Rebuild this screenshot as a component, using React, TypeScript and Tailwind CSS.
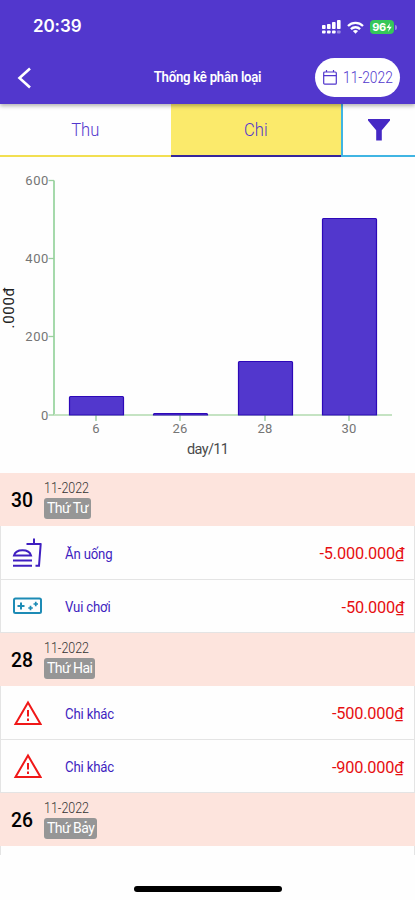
import React from 'react';

type Entry = { name: string; amount: string; icon: 'food' | 'game' | 'warning' };
type Day = { day: string; weekday: string; entries: Entry[] };

const days: Day[] = [
  {
    day: '30',
    weekday: 'Thứ Tư',
    entries: [
      { name: 'Ăn uống', amount: '-5.000.000₫', icon: 'food' },
      { name: 'Vui chơi', amount: '-50.000₫', icon: 'game' },
    ],
  },
  {
    day: '28',
    weekday: 'Thứ Hai',
    entries: [
      { name: 'Chi khác', amount: '-500.000₫', icon: 'warning' },
      { name: 'Chi khác', amount: '-900.000₫', icon: 'warning' },
    ],
  },
  { day: '26', weekday: 'Thứ Bảy', entries: [] },
];

// bar x, bar top, label
const bars = [
  { x: 69, top: 239.5, label: '6' },
  { x: 153, top: 256.5, label: '26' },
  { x: 238, top: 204.5, label: '28' },
  { x: 322, top: 61.5, label: '30' },
];

const ticks = [
  { y: 23.5, label: '600' },
  { y: 101.5, label: '400' },
  { y: 179.5, label: '200' },
  { y: 258, label: '0' },
];

const StatusBar = () => (
  <div className="flex h-[54px] items-center justify-between pl-[33px] pr-[18px]">
    <span className="text-[17px] font-semibold tracking-[-0.1px] font-['Inter',sans-serif]">20:39</span>
    <div className="flex items-center gap-[6px]">
      <svg width="19" height="14" viewBox="0 0 19 14" fill="currentColor">
        <rect x="0" y="5" width="3.6" height="4" rx="0.8" />
        <rect x="5" y="4" width="3.6" height="5" rx="0.8" />
        <rect x="10" y="2" width="3.6" height="7" rx="0.8" />
        <rect x="15" y="0" width="3.6" height="9" rx="0.8" />
        <rect x="0" y="10.5" width="3.6" height="3" rx="0.8" />
        <rect x="5" y="10.5" width="3.6" height="3" rx="0.8" />
        <rect x="10" y="10.5" width="3.6" height="3" rx="0.8" />
        <rect x="15" y="10.5" width="3.6" height="3" rx="0.8" opacity="0.4" />
      </svg>
      <svg width="17" height="13" viewBox="0 0 17 13" fill="none" stroke="currentColor" strokeWidth="2.3">
        <path d="M1 5a10.8 10.8 0 0 1 15 0" />
        <path d="M3.9 8.1a6.6 6.6 0 0 1 9.2 0" />
        <path d="M8.5 12.8 5.9 10.1a3.8 3.8 0 0 1 5.2 0Z" fill="currentColor" stroke="none" />
      </svg>
      <div className="flex items-center gap-px">
        <div className="flex h-[14px] w-[24px] items-center justify-center rounded-[4px] bg-[#35c759] text-[11px] font-bold leading-none tracking-[-0.5px] font-['Inter',sans-serif]">
          96
          <svg width="6" height="9" viewBox="0 0 6 9" fill="currentColor">
            <path d="M4 0 0.5 5H3L2 9 5.8 3.7H3.3Z" />
          </svg>
        </div>
        <div className="h-[5px] w-[2px] rounded-r bg-white/40" />
      </div>
    </div>
  </div>
);

const Header = () => (
  <header className="relative z-10 h-[104px] bg-[#5237cd] text-white shadow-[0_2px_4px_rgba(0,0,0,0.3)]">
    <StatusBar />
    <div className="grid h-[47px] grid-cols-[100px_1fr_100px] items-center">
      <svg className="ml-[17px]" width="14" height="22" viewBox="0 0 14 22" fill="none" stroke="currentColor" strokeWidth="2.6">
        <path d="M13 1.5 2.5 11 13 20.5" />
      </svg>
      <h1 className="origin-center scale-x-[0.88] whitespace-nowrap text-center text-[15px] font-semibold tracking-[-0.3px]">
        Thống kê phân loại
      </h1>
      <button className="flex h-[39px] w-[85px] items-center rounded-full bg-white pl-[8px] text-[#5237cd]">
        <svg className="shrink-0" width="14" height="15" viewBox="0 0 14 15" fill="none" stroke="currentColor" strokeWidth="1.2">
          <rect x="0.7" y="2" width="12.6" height="12.2" rx="1" />
          <path d="M0.7 5.7h12.6M3.5 0v2M10.5 0v2" />
        </svg>
        <span className="ml-[6px] origin-left scale-x-[0.81] whitespace-nowrap text-[17px] font-light">11-2022</span>
      </button>
    </div>
  </header>
);

const Tabs = () => (
  <nav className="flex h-[53px] text-[18px] font-light text-[#5237cd]">
    <button className="w-[171px] border-b-2 border-[#f2df52]">
      <span className="inline-block scale-x-[0.92]">Thu</span>
    </button>
    <button className="w-[170px] border-b-2 border-[#35259c] bg-[#fbea6b]">
      <span className="inline-block scale-x-[0.92]">Chi</span>
    </button>
    <button className="flex flex-1 items-center justify-center border-b-2 border-l-2 border-[#40b5e3]">
      <svg width="22" height="22" viewBox="0 0 22 22" fill="#4528c4">
        <path d="M0 0H22V1.5L13.8 11.2V21.5H8.2V11.2L0 1.5Z" />
      </svg>
    </button>
  </nav>
);

const BarChart = () => (
  <svg className="block" width="415" height="316" viewBox="0 0 415 316">
    <g fontFamily="Roboto, sans-serif">
      <path d="M54 23.5V258" stroke="#8fd096" strokeWidth="1.6" />
      <path d="M54 258H392" stroke="#c5e3c3" strokeWidth="1.8" />
      {ticks.map((t) => (
        <g key={t.label}>
          <path d={`M48.5 ${t.y}H54`} stroke="#9bcf9e" strokeWidth="1.3" />
          <text x="49" y={t.y + 4.5} textAnchor="end" fontSize="13" letterSpacing="0.6" fill="#757575">
            {t.label}
          </text>
        </g>
      ))}
      {bars.map((b) => (
        <g key={b.label}>
          <path d={`M${b.x + 27} 258v6`} stroke="#8fc795" strokeWidth="1.3" />
          <path
            d={`M${b.x + 0.5} 258V${b.top + 1}q0-1 1-1h52q1 0 1 1V258Z`}
            fill="#5237cd"
            stroke="#2d08b8"
            strokeWidth="1.2"
          />
          <text x={b.x + 27} y="275.5" textAnchor="middle" fontSize="13" letterSpacing="0.3" fill="#757575">
            {b.label}
          </text>
        </g>
      ))}
      <text x="208" y="297" textAnchor="middle" fontSize="14.5" textLength="42" fill="#4a4a4a">
        day/11
      </text>
      <text transform="translate(14 151) rotate(-90)" textAnchor="middle" fontSize="15" textLength="41" fill="#222">
        .000đ
      </text>
    </g>
  </svg>
);

const FoodIcon = () => (
  <svg width="30" height="30" viewBox="0 0 30 30" fill="none" stroke="#3f1fc0" strokeWidth="2">
    <path d="M2 17.5C4 10.5 17 10.5 19 17.5Z" />
    <path d="M1 22.5H20M1 27.8H20" />
    <path d="M14.5 6H29.5M22 0.5V6M28.7 6 27 27.8H23.5" />
  </svg>
);

const GameIcon = () => (
  <svg width="30" height="30" viewBox="0 0 30 30" fill="none" stroke="#1d8bb5" strokeWidth="2">
    <rect x="2" y="7.5" width="27" height="14.5" rx="1.5" />
    <path d="M5.5 15h7M9 11.5v7" />
    <path d="M21.5 13h4.5M23.75 10.8v4.5M16.3 17h4.5M18.5 14.8v4.5" strokeWidth="1.7" />
  </svg>
);

const WarningIcon = () => (
  <svg width="30" height="30" viewBox="0 0 30 30" fill="none" stroke="#f01818" strokeWidth="2">
    <path d="M16 4.5 28.5 26H3.5Z" />
    <path d="M16 12v6.5M16 20.5v2.5" />
  </svg>
);

const icons = { food: FoodIcon, game: GameIcon, warning: WarningIcon };

const EntryRow = ({ entry, first }: { entry: Entry; first: boolean }) => {
  const Icon = icons[entry.icon];
  return (
    <div className={`flex items-center border-x border-b border-[#e4e4e4] pl-[11px] pr-[10px] ${first ? 'h-[54px]' : 'h-[53px]'}`}>
      <Icon />
      <span className="ml-[23px] mt-[3px] origin-left scale-x-[0.88] text-[15px] tracking-[-0.2px] text-[#3f1fc0]">{entry.name}</span>
      <span className="ml-auto mt-[3px] origin-right scale-x-[0.96] text-[17px] tracking-[-0.2px] text-[#e60f12]">{entry.amount}</span>
    </div>
  );
};

const DayHeader = ({ day, weekday }: { day: string; weekday: string }) => (
  <div className="flex h-[53px] items-center bg-[#fde4dd] pl-[11px]">
    <span className="mt-[3px] w-[33px] origin-left scale-x-[0.92] text-[21px] font-medium text-black">{day}</span>
    <div className="flex flex-col items-start">
      <span className="origin-left scale-x-[0.83] text-[15px] font-light leading-[17px] text-[#333]">11-2022</span>
      <span className="mt-px h-[21px] rounded-[3px] bg-[#969696] px-[3px] text-[14px] leading-[21px] tracking-[-0.55px] text-white">
        {weekday}
      </span>
    </div>
  </div>
);

export default function App() {
  return (
    <div className="flex h-[900px] w-[415px] flex-col overflow-hidden bg-[#fefefe] font-['Roboto',sans-serif]">
      <Header />
      <Tabs />
      <BarChart />
      <main>
        {days.map((d) => (
          <section key={d.day}>
            <DayHeader day={d.day} weekday={d.weekday} />
            {d.entries.map((entry, i) => (
              <EntryRow key={i} entry={entry} first={i === 0} />
            ))}
          </section>
        ))}
        <div className="h-[9px] border-x border-[#e4e4e4]" />
      </main>
      <div className="mx-auto mb-[8px] mt-auto h-[6px] w-[148px] rounded-full bg-black" />
    </div>
  );
}
